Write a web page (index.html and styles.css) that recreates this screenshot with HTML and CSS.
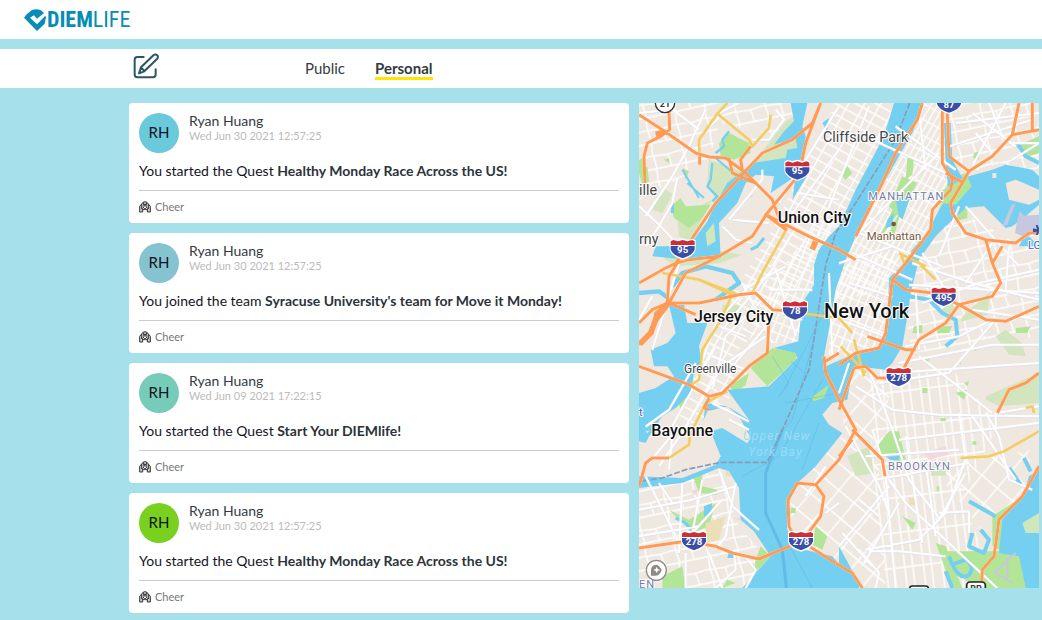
FILE: index.html
```html
<!DOCTYPE html>
<html lang="en">
<head>
<meta charset="utf-8">
<title>DIEMlife</title>
<meta name="viewport" content="width=device-width, initial-scale=1">
<link rel="stylesheet" href="styles.css">
</head>
<body>
<header class="header">
  <a class="logo" href="#">
    <svg class="logo-mark" viewBox="0 0 66 66" aria-hidden="true">
      <path fill="#078db5" d="M0 26 Q9 13 24 3 Q37 -2 51 4 L60 12 L39 29 L30 19 L18 26 L39 46 L64 20 L66 25 L62 44 L39 66 Z"/>
    </svg>
    <span class="logo-text"><b>DIEM</b>LIFE</span>
  </a>
</header>
<nav class="tabs">
  <button class="compose" aria-label="Write a post">
    <svg viewBox="0 0 78 78" aria-hidden="true" fill="none" stroke="#2c5564" stroke-width="6" stroke-linejoin="round" stroke-linecap="round">
      <path d="M32 12 H13 Q5 12 5 20 V64 Q5 73 13 73 H60 Q68 73 68 64 V49"/>
      <path d="M18 61 L24 43 L62 6 Q68 2 73 7 Q77 12 72 18 L34 55 Z M25 44 L34 54"/>
    </svg>
  </button>
  <a class="tab" href="#">Public</a>
  <a class="tab tab-active" href="#" aria-current="page">Personal</a>
</nav>
<main class="content">
  <section class="feed">
    <article class="card">
      <div class="author"><span class="avatar sky">RH</span><div><div class="name">Ryan Huang</div><time class="date">Wed Jun 30 2021 12:57:25</time></div></div>
      <p class="message">You started the Quest <b>Healthy Monday Race Across the US!</b></p>
      <div class="actions"><button class="cheer"><svg viewBox="0 0 36 34" aria-hidden="true"><use href="#hands"/></svg>Cheer</button></div>
    </article>
    <article class="card">
      <div class="author"><span class="avatar steel">RH</span><div><div class="name">Ryan Huang</div><time class="date">Wed Jun 30 2021 12:57:25</time></div></div>
      <p class="message">You joined the team <b>Syracuse University's team for Move it Monday!</b></p>
      <div class="actions"><button class="cheer"><svg viewBox="0 0 36 34" aria-hidden="true"><use href="#hands"/></svg>Cheer</button></div>
    </article>
    <article class="card">
      <div class="author"><span class="avatar mint">RH</span><div><div class="name">Ryan Huang</div><time class="date">Wed Jun 09 2021 17:22:15</time></div></div>
      <p class="message">You started the Quest <b>Start Your DIEMlife!</b></p>
      <div class="actions"><button class="cheer"><svg viewBox="0 0 36 34" aria-hidden="true"><use href="#hands"/></svg>Cheer</button></div>
    </article>
    <article class="card">
      <div class="author"><span class="avatar lime">RH</span><div><div class="name">Ryan Huang</div><time class="date">Wed Jun 30 2021 12:57:25</time></div></div>
      <p class="message">You started the Quest <b>Healthy Monday Race Across the US!</b></p>
      <div class="actions"><button class="cheer"><svg viewBox="0 0 36 34" aria-hidden="true"><use href="#hands"/></svg>Cheer</button></div>
    </article>
  </section>
  <section class="map" aria-label="Map of New York">
    <svg class="map-canvas" viewBox="0 0 1200 1455">
      <defs>
        <g id="hands" fill="none" stroke="#333" stroke-width="3" stroke-linejoin="round">
          <path fill="#ccc" d="M2 32 V15 L8 8 L12 3 L18 1 L24 3 L28 8 L34 15 V32 H25 V22 L21 16 V9 H15 V16 L11 22 V32 Z"/>
          <path d="M8 9 V23 M28 9 V23 M12 4 L16 13 M24 4 L20 13 M11 25 H17 V20 M25 25 H19 V20"/>
        </g>
        <g id="shield">
          <path fill="#fff" d="M-39 -26 L-30 -31 L-15 -28 L0 -32 L15 -28 L30 -31 L39 -26 V2 Q34 22 0 32 Q-34 22 -39 2 Z"/>
          <path fill="#cc2f38" d="M-36 -12 V-23 L-28 -27 L-14 -23 L0 -27 L14 -23 L28 -27 L36 -23 V-12 Z"/>
          <path fill="#3b4ea5" d="M-36 -9 H36 V1 Q32 18 0 28 Q-32 18 -36 1 Z"/>
        </g>
        <pattern id="blocks" width="42" height="58" patternUnits="userSpaceOnUse" patternTransform="rotate(29)"><path class="local" d="M0 5H42M0 34H42M5 0V58"/></pattern>
        <pattern id="avenues" width="17" height="42" patternUnits="userSpaceOnUse" patternTransform="rotate(29)"><path class="local" d="M4 0V42M0 8H17"/></pattern>
        <pattern id="dense" width="23" height="30" patternUnits="userSpaceOnUse" patternTransform="rotate(22)"><path class="local" d="M0 5H23M5 0V30"/></pattern>
        <pattern id="suburb" width="90" height="78" patternUnits="userSpaceOnUse" patternTransform="rotate(-12)"><path class="local" d="M0 8L50 12L90 8M0 48H90M8 0L12 40L8 78M53 12L58 48"/></pattern>
        <pattern id="brook" width="56" height="105" patternUnits="userSpaceOnUse" patternTransform="rotate(-7)"><path class="local" d="M6 0V105M30 0V105M0 9H56"/></pattern>
        <pattern id="diag" width="60" height="62" patternUnits="userSpaceOnUse" patternTransform="rotate(40)"><path class="local" d="M6 0V62M0 8H60"/></pattern>
      </defs>
      <rect width="1200" height="1455" fill="#efe8e1"/>

      <!-- local streets -->
      <path fill="url(#suburb)" d="M0 0H500L420 100L240 60L210 180L0 290Z M0 1150L240 1100L300 1270L380 1360L310 1455H0Z"/>
      <path fill="url(#blocks)" d="M590 0H770L690 190L600 370L520 481L420 620L240 800L330 800L220 960L110 960L250 620L390 400Z"/>
      <path fill="url(#dense)" d="M440 480L560 330L600 350L540 481L520 550L480 720L390 720L380 560Z M570 500L780 440L750 600L735 730L570 770Z"/>
      <path fill="url(#avenues)" d="M850 0H910L930 230L850 410L770 500L750 560L570 600L650 400Z"/>
      <path fill="url(#suburb)" d="M930 0H1200V230L1080 180L990 210L930 180Z M940 310L1130 420L1200 380V700L820 750L790 600L850 450Z"/>
      <path fill="url(#diag)" d="M620 790L760 800L720 1110L740 1455H670L600 1390L430 1270L460 1150L610 1000Z M960 1080L1180 1040L1150 1180L1030 1280L900 1120Z"/>
      <path fill="url(#brook)" d="M690 800L940 800L1080 960L970 1180L1040 1370L1000 1455H740L700 1080Z"/>

      <!-- parks -->
      <g class="park-pale">
        <path d="M370 145L440 55L500 20L470 90L510 120L480 180L340 190Z M210 170L310 205L230 290L205 240Z M60 455L165 430L310 455L240 481L110 490Z M970 640L1055 565L1045 635L965 656Z M905 620L950 590L960 610L935 635Z M1100 680L1150 720L1160 760L1110 755L1070 700Z M1040 880L1200 810V900L1080 910L1040 890Z M625 1060L690 1030L705 1110L650 1120Z M40 320L75 255L100 275L70 330Z M250 605H300V640L250 660Z M880 1090H920V1118H875Z M220 290L150 420L120 400L115 340Z"/>
      </g>
      <g class="park">
        <path d="M270 90L330 120L335 150L285 170L245 160L240 120Z M95 310L125 285L140 310L215 305L190 345L150 375L105 345Z M745 400L785 320L720 410Z M725 395L765 310L785 330L765 400L730 420Z M750 310L790 220L835 240L800 300L780 340Z M930 230L980 210L1000 260L960 300L900 320Z M400 735L475 750L470 770L385 850L335 795Z M520 880L570 845L550 880L525 890Z M270 850L330 810L320 845L290 870Z M715 1030L750 985H780L800 1070L770 1075L730 1055Z M910 1345L1080 1345L1140 1350L1160 1455L1000 1455Z M890 1320L920 1330L970 1455H940Z M1060 1240L1135 1190L1140 1240L1100 1350L1060 1330Z M1080 1340L1130 1350L1160 1455H1050Z M365 1330L395 1360L340 1420L350 1370Z M70 1420L130 1390L140 1455H70Z M90 1220L150 1250L230 1200L210 1270L160 1290Z M1130 130L1200 100V150L1170 160Z M110 890L145 880L125 915Z M0 170L18 160V200L0 210Z M160 1115H190V1150L235 1160V1175L180 1170Z M530 1270L565 1300L550 1340L520 1325Z M0 210L25 190L30 235L10 250Z M1000 250L1020 225L1010 270Z M960 330L985 310V345L950 355Z M825 670L850 665V690L820 690Z M605 215L625 190L640 210L620 230Z M805 165H825L820 215L800 230Z"/>
        <path d="M75 170L90 165V180ZM130 195L150 205L140 230ZM405 210L420 220L410 235ZM265 1430L290 1440L250 1455ZM790 1240L830 1260L820 1280ZM895 670H940L930 690H895ZM950 870L985 860L975 890ZM850 855H865V870H850ZM905 945H920V955H905ZM455 1215H470V1230H455ZM1005 150L1020 145V170L1002 165ZM1130 675L1175 670L1165 690H1130ZM1000 735L1020 730L1010 745ZM855 765L870 760V775H855ZM955 775L965 770V785ZM975 840L990 835L985 850ZM1000 1015H1012V1025H1000ZM893 1150H900V1165H893Z"/>
      </g>
      <path fill="#eadfb8" d="M200 1260L260 1240L240 1310L200 1320Z M260 1105H275V1120H260Z M810 1185H830V1205H810Z M330 270L342 278L335 286Z"/>
      <path fill="#f3d9df" d="M850 1050L920 1030L930 1055L870 1070Z M285 1245L305 1240L300 1255Z M160 1160H175V1175H160Z M920 290L945 280L930 310Z"/>

      <!-- water -->
      <g class="water">
        <path d="M765 0H850L825 80L740 230L700 290L650 400L620 470L590 560L575 650L555 760L560 790L640 755L720 735L745 680L750 525L790 486L820 440L870 380L900 320L930 280L920 180L915 60H935L940 170L970 225L1060 200L1100 185L1180 200L1200 220V305L1160 340L1120 370L1100 375L1035 310L980 315L920 370L890 400L840 470L815 570L810 610L790 730L760 780L740 800L650 790L635 830L625 890L580 900L550 935L570 965L610 990L530 1090L470 1145L445 1215V1280L475 1335L580 1360L660 1455H310L395 1360L345 1285L305 1250L300 1155L270 1105L240 1095L130 1140L0 1155V1120L130 1125L230 1085L245 1060L190 980L200 900L265 910L330 950L265 860L390 850L475 765L470 750L405 735L478 715L490 600L525 545L525 486L540 440L570 400L600 370L650 260L735 100Z"/>
        <path d="M455 0H505L490 70L500 100L495 170L510 210L460 290L470 220L395 270L405 220L350 215L320 240L295 300L240 360L245 465L150 470L40 460L50 430L150 430L205 355L225 310L265 240L340 180L440 165L445 140L475 135L470 105L405 125L435 85L465 55Z"/>
        <path d="M90 605H135L145 660L205 660L180 730L190 790L165 810L155 870L110 915L70 940L40 981L0 990V870L50 855L105 820L85 790L45 790L35 740L85 720L110 690Z"/>
        <path d="M780 340L770 290L815 280L790 350Z M745 350L765 330L760 370L740 375Z M550 60L570 45L565 85ZM1150 410L1170 400L1200 430H1140Z"/>
        <path d="M1200 1100L1170 1120L1155 1170L1090 1250L1080 1350L1140 1360L1160 1455H1200Z"/>
        <path d="M0 970L25 990L60 955L55 970L30 1000L20 1020L0 1015Z M600 1330L660 1440V1455H600Z"/>
        <path d="M740 1060L785 1045L780 1070L755 1072Z M195 1210L220 1200L215 1235L195 1240Z M270 1345H285V1365H265Z"/>
      </g>
      <path fill="#efe8e1" d="M190 960L205 925L265 910L300 940L335 1005L325 1021L250 975L215 985L245 1060L215 1090L160 1090Z"/>
      <g class="creek">
        <path d="M270 85L250 110L255 130L230 150M220 180L215 230L205 250L235 280L220 295" stroke-width="7"/>
        <path d="M230 165L300 225L360 245M130 200L180 285M145 240L195 285" stroke-width="6"/>
        <path d="M0 570L60 565L95 590M100 550L130 510L200 490L280 510L300 540L230 590" stroke-width="13"/>
        <path d="M785 575L870 590L910 630L950 650L955 700L920 730" stroke-width="12"/>
        <path d="M1135 120L1160 160L1200 180M1110 1095L1145 1145M1155 1065L1175 1105M990 1195L1070 1240" stroke-width="12"/>
        <path d="M1025 1280L1050 1310L1035 1350L990 1330L1000 1290M930 1360Q960 1440 990 1415Q1010 1390 980 1370L940 1385M920 1405L940 1455" stroke-width="12"/>
        <path d="M110 1245L140 1260L160 1285M335 440L355 430L375 405M100 330V300" stroke-width="9"/>
      </g>
      <path fill="#efe8e1" d="M1100 240L1130 230L1200 260V290L1170 305L1110 290Z M1060 210H1072V225H1060Z M1005 320L1020 310V330Z"/>
      <path fill="#c5c8df" d="M1135 350L1142 325L1155 338L1200 335V375L1165 405L1128 390Z M1118 305L1130 300L1105 365L1090 370Z"/>
      <path fill="#d0e6bd" d="M200 390L225 360L230 415L205 430Z M1150 1260L1200 1230V1290L1160 1290Z"/>
      <path class="park" d="M515 885L570 845L555 885L525 895Z M905 265L985 220L998 250L950 305L910 300Z"/>

      <!-- shipping lanes -->
      <g fill="none" stroke="#57ade0" stroke-width="2" opacity=".6">
        <path d="M435 860L570 600M440 900L600 870M530 690L500 800L460 950L430 981M310 1120L420 1060L550 830M455 1335L520 1455M540 960L490 1100M455 775L510 820M400 760L450 840L420 880" />
        <path d="M430 980L380 1110V1230L430 1340L442 1455" stroke-width="9"/>
      </g>
      <path fill="none" stroke="#8a9bb8" stroke-width="5" stroke-dasharray="18 6" d="M812 0L770 110L650 300L590 390L560 486L510 800L430 981L385 1078H245L140 1100L70 1125L0 1135"/>

      <!-- main streets -->
      <g class="major">
        <path d="M0 30L100 20L180 80M200 20L150 130L100 220L20 340M240 30L300 0M240 45L190 90M410 20L435 50L390 110L340 110M0 310L65 370L130 440M115 225L100 300L60 370L20 430M270 350L370 230L370 200M250 370L290 410L340 420M280 350L390 360M420 300L600 10M440 360L600 140M480 270L600 290M520 440L690 10M400 490L460 390"/>
        <path d="M120 481L40 740M40 580L0 650M230 660L330 550L440 490M250 680L400 500M180 800L230 665L320 700M220 860L260 700L380 580M100 970L230 730M140 970L250 790L380 700M280 790L390 660M310 540L400 720M410 500L470 700M390 560H520M400 620L490 650M220 760L320 800"/>
        <path d="M600 480L760 430M640 450L820 530M650 400L900 150M700 110L920 210M770 70L950 200M630 540L760 580M600 650L740 700M660 390L910 490M840 30L860 200M930 130L1180 50M950 60L1200 30M1100 0L1000 190M1000 30L1130 130M1050 0L1090 100M1110 120H1200M1010 90L1060 150M1120 170L1200 120"/>
        <path d="M820 480L1000 540L1200 590M850 450L950 610M810 545L1200 570M830 560L840 740M850 600L1020 540L1200 500M800 730L960 700L1060 650M780 780L1060 725H1200M760 810L1200 780M840 760L1060 930M720 840L930 810L1070 650M650 850L760 920L900 935L1200 940M690 800L760 980M1040 930L1080 1000L1110 1130L1180 1160M1000 940L1130 1130M960 930L980 1070L920 1230L880 1270M1070 930V980M780 1010L1200 960M1070 930L1200 910M960 310L900 460M1060 420L980 540M1110 430L1100 560M980 310L1140 490M1000 620L1200 650"/>
        <path d="M700 980L750 1130L800 1200L1075 1455M760 980L810 1130L900 1245M680 1340L840 1310L900 1250L980 1110M740 1120L770 1455M800 1000L850 1320M860 1080L890 1300M670 1390L780 1200M680 1060L960 1040M710 1130L990 1080M900 1230L990 1225V1290M660 1340L720 1410L710 1455M690 1345H780L920 1360M600 1330L750 1150M610 1290L700 1390M720 1240L660 1190M0 1220L160 1190L290 1150M20 1120L120 1320M130 1140L120 1350M190 1130L160 1290L250 1190M0 1300L180 1270M60 1140L100 1200M240 1100L280 1210L360 1280M290 1140L260 1300L230 1340M210 1350L250 1455M140 1350L140 1455M285 1340L290 1400L230 1455M310 1350L350 1400L320 1455M560 1230L600 1200M500 1180L560 1090"/>
        <path d="M20 970L90 920L170 780M30 1080L120 970M60 1090L150 960M90 1100L100 1000M270 950L330 980M220 900L330 955M630 780L600 870M570 510L580 760M620 970L720 1150L750 1230"/>
      </g>

      <!-- parkways -->
      <g class="yellow">
        <path d="M265 0L235 32L180 110L182 180M235 32L330 110L340 130L390 75L395 35M450 365L375 500L340 570M180 530L280 575L240 660L190 740L180 830L150 850M70 510L180 530L300 575M400 620L600 645L640 690M605 730L680 810M645 710L675 820M160 981L200 900L265 865M155 981L150 1025L90 1065M780 450L860 490M845 486L890 530M965 1065L1050 1060L1095 1045L1200 985M1160 915L1180 910L1185 930M785 450L795 480"/>
      </g>

      <!-- highways -->
      <g class="orange">
        <path d="M0 35L70 80L170 150L210 162L260 165L320 210L400 290L420 345L440 380L380 335L510 400L600 440L650 470M0 660L40 620L85 600L180 600L300 575L350 570L400 620L470 625M0 540L80 495L110 481L150 470L240 460L340 400L385 330L410 300L480 215L500 120L545 0M110 481L230 300L370 150L460 110L520 60L545 0M90 25L92 80L65 100L25 120L15 160L18 240M85 600L90 520L115 480M90 600L170 635M0 725L40 690L50 630L90 600L140 510L240 460M0 790L150 845L210 880L250 870L330 790L385 750L390 650M210 885L195 915L210 920M0 1150L20 1080L40 1065H90M0 1335L140 1315L230 1330L280 1350L360 1368L450 1330L510 1330L590 1380M475 1320L450 1270L447 1190L475 1140L530 1145L555 1180L545 1240L500 1300M530 1145L600 1070L650 980L600 890L560 810L555 760M310 200L305 170L335 130M270 165L280 210L350 240M182 160V185"/>
        <path d="M850 0L835 50L770 150L730 240L650 400M910 20V180L940 230L935 260L880 320L875 380L800 481L760 530L740 690L720 735L650 750L600 785M925 30L930 160L990 205L1060 160L1120 95L1140 0M1120 95L1200 80M1180 0V90M990 205L935 300L940 330L980 390L1040 410L1130 420L1170 390H1200M1040 410L1060 480L1085 540L1060 580L960 605L920 660L840 710L795 795M1060 480L1090 430M760 530L800 560L880 570L960 605L1040 650L1100 655L1200 610M685 700L800 740H830M920 210L975 240M600 920L645 795L680 790L715 825H750M600 1060L640 1010M640 980L730 1070L738 1120M590 1380L640 1410L670 1455M1075 930L1110 860L1160 840L1200 810M1027 1455L1030 1400L1065 1360L1080 1250L1150 1180L1200 1090M560 775L600 750"/>
      </g>
      <path fill="none" stroke="#ff9b55" stroke-width="17" d="M2 723L35 690L50 650L88 600M520 440L530 415M50 94L80 87"/>
      <path fill="none" stroke="#c8c7d8" stroke-width="6" d="M1065 1410L1130 1350M1070 1410L1120 1440M1105 1365V1430"/>
      <circle cx="764" cy="363" r="7" fill="#78583b"/>
      <path fill="#3b4ea5" d="M1182 376L1194 379L1190 366H1196L1200 375V387L1196 396H1190L1194 386L1182 388Z"/>

      <!-- labels -->
      <g class="place town">
        <text x="552" y="116">Cliffside Park</text><text x="0" y="277">ille</text><text x="0" y="424">rny</text>
        <text x="135" y="811" class="small">Greenville</text>
      </g>
      <g class="place city">
        <text x="416" y="360">Union City</text><text x="165" y="657">Jersey City</text><text x="37" y="998">Bayonne</text>
        <text x="555" y="644" class="metro">New York</text>
      </g>
      <text x="683" y="411" class="place landmark">Manhattan</text>
      <g class="place borough"><text x="688" y="292">MANHATTAN</text><text x="747" y="1101">BROOKLYN</text><text x="0" y="1455">EN</text></g>
      <g class="bay"><text x="312" y="1012">Upper New</text><text x="328" y="1058">York Bay</text></g>
      <text class="place airport" x="1167" y="438">LG</text><text class="place airport" x="0" y="938">t</text>

      <g class="route">
        <use href="#shield" x="475" y="202"/><text x="475" y="214">95</text>
        <use href="#shield" x="131" y="438"/><text x="131" y="450">95</text>
        <use href="#shield" x="468" y="622"/><text x="468" y="634">78</text>
        <use href="#shield" x="914" y="581"/><text x="914" y="593">495</text>
        <use href="#shield" x="779" y="822"/><text x="779" y="834">278</text>
        <use href="#shield" x="165" y="1314"/><text x="165" y="1326">278</text>
        <use href="#shield" x="486" y="1314"/><text x="486" y="1326">278</text>
        <use href="#shield" x="930" y="1"/><text x="930" y="15">87</text>
      </g>
      <circle cx="78" cy="0" r="29" fill="#fff" stroke="#333" stroke-width="4"/><text class="sign" x="78" y="11">21</text>
      <rect x="983" y="1437" width="56" height="40" rx="10" fill="#fff" stroke="#222" stroke-width="5"/><text class="sign" x="1011" y="1466">BP</text>
      <rect x="812" y="1449" width="56" height="30" rx="8" fill="#fff" stroke="#222" stroke-width="5"/>

      <circle cx="52" cy="1402" r="30" fill="#fff" stroke="#8e8b86" stroke-width="4"/>
      <path fill="#8e8b86" d="M36 1418V1399Q38 1386 51 1385Q58 1384 68 1400Q64 1417 50 1418Z"/>
      <path fill="#fff" d="M53 1391L56 1398L63 1401L56 1404L53 1411L50 1404L43 1401L50 1398Z"/>
    </svg>
  </section>
</main>
</body>
</html>
```

FILE: styles.css
```css
* { box-sizing: border-box; }
body {
  margin: 0;
  min-height: 100vh;
  background: #a6e0eb;
  color: #14141f;
  font-family: Lato, "Open Sans", sans-serif;
  font-size: 14px;
}
a { color: inherit; text-decoration: none; }
button { border: 0; padding: 0; background: none; font: inherit; cursor: pointer; }

.header {
  display: flex;
  align-items: center;
  height: 39px;
  padding-left: 24px;
  background: #fff;
}
.logo { display: flex; align-items: center; gap: 1px; color: #078db5; }
.logo-mark { width: 22px; height: 22px; }
.logo-text { font: 22px/24px "Liberation Sans Narrow", "Roboto Condensed", sans-serif; }

.tabs {
  display: flex;
  align-items: center;
  height: 39px;
  margin-top: 10px;
  padding-left: 133px;
  background: #fff;
}
.compose { width: 26px; height: 26px; margin-right: 146px; margin-bottom: 6px; }
.compose svg { display: block; width: 26px; height: 26px; }
.tab { margin-right: 30px; padding-top: 2px; border-bottom: 3px solid transparent; font-size: 15px; line-height: 18px; color: #333b43; }
.tab-active { border-color: #ffe500; font-weight: bold; }

.content {
  display: flex;
  align-items: flex-start;
  gap: 10px;
  padding: 15px 3px 7px 129px;
}
.feed { flex: 5 1 0; display: grid; gap: 10px; }
.map { flex: 4 1 0; min-width: 0; }

.card { padding: 10px 10px 8px; border-radius: 4px; background: #fff; }
.author { display: flex; gap: 10px; line-height: 16px; }
.avatar {
  width: 40px;
  height: 40px;
  border-radius: 50%;
  font-size: 15px;
  line-height: 39px;
  text-align: center;
}
.sky { background: #6bc9dc; }
.steel { background: #85c3d1; }
.mint { background: #77ccb9; }
.lime { background: #79d01f; }
.name { color: #333b43; }
.date { display: block; font-size: 11px; line-height: 14px; color: #bbb; }
.message { margin: 8px 0 0; line-height: 20px; }
.message b { color: #2c333a; }
.actions { margin-top: 9px; padding-top: 8px; border-top: 1px solid #ccc; }
.cheer { display: flex; align-items: center; gap: 4px; font-size: 11px; line-height: 16px; color: #777; }
.cheer svg { width: 12px; height: 12px; }

.map-canvas { display: block; width: 100%; height: auto; overflow: hidden; }
.local { fill: none; stroke: #fff; stroke-width: 4; }
.park { fill: #b3e599; }
.park-pale { fill: #d3e5bf; }
.water { fill: #75cff0; }
.creek { fill: none; stroke: #75cff0; stroke-linejoin: round; }
.major { fill: none; stroke: #fff; stroke-width: 6; stroke-linejoin: round; filter: drop-shadow(0 2px 0 #dcdcec); }
.yellow { fill: none; stroke: #f4cd62; stroke-width: 8; stroke-linejoin: round; }
.orange { fill: none; stroke: #ff9b55; stroke-width: 9; stroke-linejoin: round; filter: drop-shadow(0 0 2px #fff); }
.place, .bay, .sign, .route { font-family: Roboto, sans-serif; }
.place { paint-order: stroke; stroke: #fff; stroke-width: 6; stroke-linejoin: round; }
.town { font-size: 43px; fill: #444; }
.small { font-size: 36px; }
.city { font-size: 48px; font-weight: 500; fill: #111; }
.metro { font-size: 60px; }
.landmark { font-size: 34px; fill: #78583b; }
.borough { font-size: 33px; letter-spacing: 3px; fill: #757aa5; }
.airport { font-size: 33px; fill: #4b5ab5; }
.bay { font-size: 37px; font-style: italic; letter-spacing: 3px; fill: #9cdcf8; }
.route { font-size: 29px; font-weight: bold; fill: #fff; text-anchor: middle; }
.sign { font-size: 27px; font-weight: bold; fill: #333; text-anchor: middle; }
```
